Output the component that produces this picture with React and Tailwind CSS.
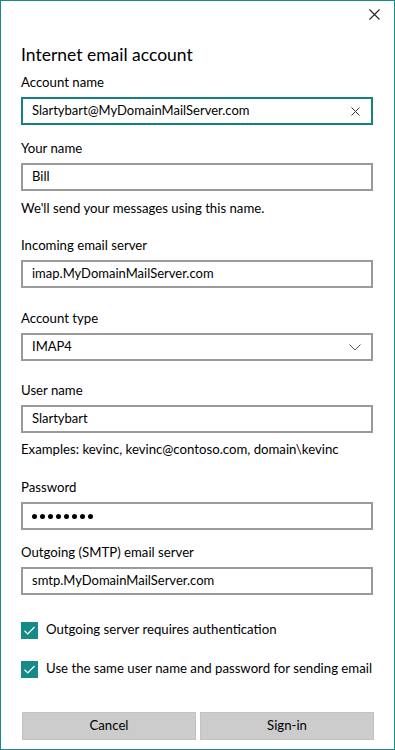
import React from "react";

const font = { fontFamily: 'Lato, "Noto Sans", Arial, sans-serif' };

function Label({ children, className = "" }) {
  return (
    <div className={"h-[20px] leading-[20px] text-[13.2px] text-black whitespace-nowrap " + className}>
      {children}
    </div>
  );
}

function Field({ value, className = "", focused = false, right = null }) {
  return (
    <div
      className={
        "h-[28px] w-[352px] flex items-center pl-[9px] pr-[9px] text-[13px] text-black bg-white border-2 " +
        (focused ? "border-[#14827f] " : "border-[#9a9a9a] ") +
        className
      }
    >
      <span className="flex-1 truncate">{value}</span>
      {right}
    </div>
  );
}

function Check({ label, className = "" }) {
  return (
    <div className={"flex items-center h-[20px] " + className}>
      <div className="w-[17px] h-[17px] bg-[#168a87] flex items-center justify-center shrink-0">
        <svg width="13" height="13" viewBox="0 0 13 13">
          <path d="M1.5 6.8 L4.8 10 L11.5 3" fill="none" stroke="white" strokeWidth="1.2" />
        </svg>
      </div>
      <span className="ml-[8px] text-[13.2px] text-black whitespace-nowrap">{label}</span>
    </div>
  );
}

function Dots() {
  return (
    <span className="flex gap-[3px] items-center">
      {[0, 1, 2, 3, 4, 5, 6, 7].map((i) => (
        <span key={i} className="w-[5px] h-[5px] rounded-full bg-black inline-block" />
      ))}
    </span>
  );
}

export default function App() {
  return (
    <div
      style={font}
      className="w-[395px] h-[750px] bg-white border border-[#178b88] flex flex-col pl-[20px] relative"
    >
      <div className="h-[40px] flex justify-end pr-[14px] items-start pt-[8px]">
        <svg width="11" height="11" viewBox="0 0 11 11">
          <path d="M0.5 0.5 L10.5 10.5 M10.5 0.5 L0.5 10.5" stroke="#222" strokeWidth="1.1" />
        </svg>
      </div>
      <div className="h-[28px] leading-[28px] text-[17.5px] text-black">
        Internet email account
      </div>
      <Label className="mt-[3px] mb-[5px]">Account name</Label>
      <Field
        focused
        value="Slartybart@MyDomainMailServer.com"
        right={
          <svg width="9" height="9" viewBox="0 0 9 9" className="mr-[2px]">
            <path d="M0.5 0.5 L8.5 8.5 M8.5 0.5 L0.5 8.5" stroke="#333" strokeWidth="1" />
          </svg>
        }
      />
      <Label className="mt-[13px] mb-[5px]">Your name</Label>
      <Field value="Bill" />
      <Label className="mt-[7px]">We'll send your messages using this name.</Label>
      <Label className="mt-[17px] mb-[5px]">Incoming email server</Label>
      <Field value="imap.MyDomainMailServer.com" />
      <Label className="mt-[20px] mb-[5px]">Account type</Label>
      <Field
        value="IMAP4"
        right={
          <svg width="12" height="7" viewBox="0 0 12 7" className="mr-[1px]">
            <path d="M0.5 0.5 L6 6 L11.5 0.5" fill="none" stroke="#555" strokeWidth="1" />
          </svg>
        }
      />
      <Label className="mt-[19px] mb-[5px]">User name</Label>
      <Field value="Slartybart" />
      <Label className="mt-[6px]">Examples: kevinc, kevinc@contoso.com, domain\kevinc</Label>
      <Label className="mt-[18px] mb-[5px]">Password</Label>
      <Field value={<Dots />} />
      <Label className="mt-[12px] mb-[5px]">Outgoing (SMTP) email server</Label>
      <Field value="smtp.MyDomainMailServer.com" />
      <Check className="mt-[25px]" label="Outgoing server requires authentication" />
      <Check className="mt-[19px]" label="Use the same user name and password for sending email" />
      <div className="flex gap-[4px] mt-[33px] w-[352px] ml-[1px]">
        <button className="flex-1 h-[28px] bg-[#cccccc] text-[13.2px] text-black border border-[#c2c2c2]">
          Cancel
        </button>
        <button className="flex-1 h-[28px] bg-[#cccccc] text-[13.2px] text-black border border-[#c2c2c2]">
          Sign-in
        </button>
      </div>
    </div>
  );
}
